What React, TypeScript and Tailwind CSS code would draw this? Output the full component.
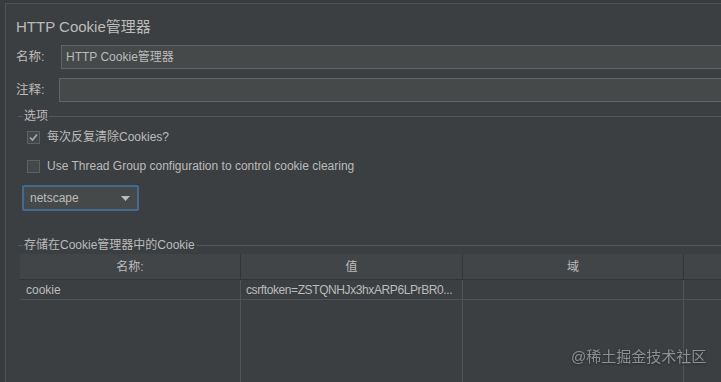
import React from 'react';

const font = { fontFamily: '"Liberation Sans", "Noto Sans CJK SC", sans-serif' };

function Checkbox({ checked }: { checked?: boolean }) {
  return (
    <span className="w-[13px] h-[13px] border border-[#5e6163] bg-[#43494a] flex items-center justify-center">
      {checked && (
        <svg width="11" height="11" viewBox="0 0 11 11">
          <path d="M2 5.5 L4.5 8 L9 2.5" fill="none" stroke="#a9abad" strokeWidth="1.6" />
        </svg>
      )}
    </span>
  );
}

function GroupTitle({ title }: { title: string }) {
  return (
    <div className="flex items-center ml-[12px]">
      <div className="w-[5px] h-px bg-[#55585a]" />
      <span className="px-[1px] text-[12px] text-[#bbbbbb] leading-[16px]">{title}</span>
      <div className="flex-1 h-px bg-[#55585a]" />
    </div>
  );
}

export default function App() {
  const cols = ['名称:', '值', '域', ''];
  return (
    <div className="relative w-[721px] h-[382px] overflow-hidden bg-[#393b3d]" style={font}>
      <div className="absolute inset-0 pl-[5px] pt-[3px]">
        <div className="h-full bg-[#3c3f41] border-l border-t border-[#4f5254] flex flex-col">
          <div className="pl-[10px] pt-[12px] h-[38px] text-[15px] leading-[22px] text-[#bbbbbb]">
            HTTP Cookie管理器
          </div>

          <div className="flex items-center mt-[3px] h-[24px]">
            <span className="w-[55px] pl-[10px] text-[12.5px] text-[#bbbbbb]">名称:</span>
            <div className="flex-1 h-[24px] bg-[#45494a] border border-[#646464] border-r-0 flex items-center pl-[4px] text-[12px] text-[#bbbbbb]">
              HTTP Cookie管理器
            </div>
          </div>

          <div className="flex items-center mt-[9px] h-[24px]">
            <span className="w-[53px] pl-[10px] text-[12.5px] text-[#bbbbbb]">注释:</span>
            <div className="flex-1 h-[24px] bg-[#45494a] border border-[#646464] border-r-0" />
          </div>

          <div className="mt-[6px]">
            <GroupTitle title="选项" />
          </div>

          <div className="flex items-center gap-[7px] ml-[21px] mt-[6px] h-[14px]">
            <Checkbox checked />
            <span className="text-[12px] text-[#bbbbbb] leading-[14px]">每次反复清除Cookies?</span>
          </div>
          <div className="flex items-center gap-[7px] ml-[21px] mt-[15px] h-[14px]">
            <Checkbox />
            <span className="text-[12px] text-[#bbbbbb] leading-[14px]">
              Use Thread Group configuration to control cookie clearing
            </span>
          </div>

          <div className="ml-[16px] mt-[12px] w-[117px] h-[26px] rounded-[2px] border-2 border-[#456a92] bg-[#45494a] flex items-center justify-between pl-[6px] pr-[7px]">
            <span className="text-[12px] text-[#bbbbbb]">netscape</span>
            <svg width="9" height="5" viewBox="0 0 9 5">
              <path d="M0 0 H9 L4.5 5 Z" fill="#bbbbbb" />
            </svg>
          </div>

          <div className="mt-[26px]">
            <GroupTitle title="存储在Cookie管理器中的Cookie" />
          </div>

          <div className="ml-[14px] mt-[1px] flex-1 flex flex-col">
            <div className="grid grid-cols-[221px_222px_221px_60px] h-[26px] bg-[#424547] border-b border-[#323436]">
              {cols.map((c, i) => (
                <div
                  key={i}
                  className="border-r border-[#323436] flex items-center justify-center text-[12px] text-[#bbbbbb]"
                >
                  {c}
                </div>
              ))}
            </div>
            <div className="grid grid-cols-[221px_222px_221px_60px] h-[20px] border-b border-[#515456]">
              <div className="border-r border-[#515456] pl-[6px] flex items-center text-[12px] text-[#bbbbbb]">cookie</div>
              <div className="border-r border-[#515456] pl-[5px] flex items-center text-[12px] tracking-[-0.4px] text-[#bbbbbb] whitespace-nowrap">
                csrftoken=ZSTQNHJx3hxARP6LPrBR0...
              </div>
              <div className="border-r border-[#515456]" />
              <div />
            </div>
            <div className="grid grid-cols-[221px_222px_221px_60px] flex-1">
              <div className="border-r border-[#515456]" />
              <div className="border-r border-[#515456]" />
              <div className="border-r border-[#515456]" />
              <div />
            </div>
          </div>
        </div>
      </div>

      <div className="absolute left-[571px] top-[345px] text-[15px] leading-[24px] text-[#8d8f91] drop-shadow-[0_1px_1px_rgba(0,0,0,0.4)]">
        @稀土掘金技术社区
      </div>
    </div>
  );
}
